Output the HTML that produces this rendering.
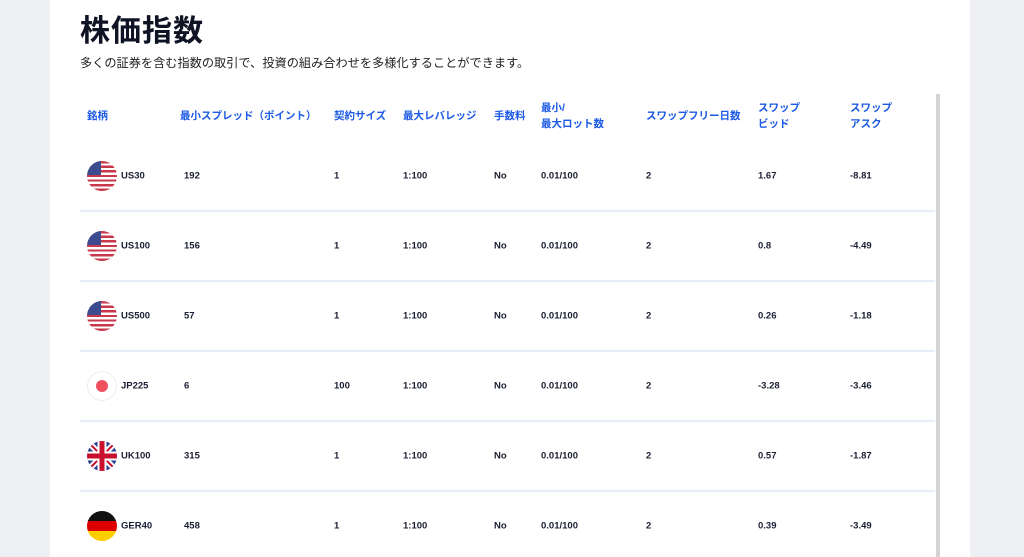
<!DOCTYPE html>
<html><head><meta charset="utf-8"><style>
body{margin:0;width:1024px;height:557px;background:#eef0f4;overflow:hidden;font-family:"Liberation Sans","Noto Sans CJK JP",sans-serif;position:relative}
.panel{position:absolute;left:50px;top:0;width:920px;height:557px;background:#fff}
h1{position:absolute;left:80px;top:6px;margin:0;font-size:30px;font-weight:700;color:#0f1425;letter-spacing:1px}
.sub{position:absolute;left:80px;top:53px;font-size:12.2px;color:#222}
.h{position:absolute;font-size:10.5px;font-weight:700;color:#1d5ae6;line-height:16px}
.c{position:absolute;font-size:9.5px;font-weight:700;color:#1b1f33;transform:translateY(-50%)}
.sep{position:absolute;left:80px;width:855px;height:2px;background:#e8eef9}
.scroll{position:absolute;left:936px;top:94px;width:4px;height:463px;background:#d4d4d4}
.flag{position:absolute;left:87px;width:30px;height:30px;border-radius:50%;overflow:hidden;transform:translateY(-50%)}
.us{background:repeating-linear-gradient(#c8384a 0 2.3px,#fff 2.3px 4.6px)}
.us:before{content:"";position:absolute;left:0;top:0;width:14px;height:14px;background:#3d4b8f}
.jp{background:#fff;box-shadow:inset 0 0 0 1px #eee}
.jp:after{content:"";position:absolute;left:9px;top:9px;width:12px;height:12px;border-radius:50%;background:#f0505e}
.de{background:linear-gradient(#111 0 33%,#dd0000 33% 66%,#ffce00 66%)}
</style></head><body>
<div class="panel"></div>
<h1>株価指数</h1>
<div class="sub">多くの証券を含む指数の取引で、投資の組み合わせを多様化することができます。</div>
<div class="h" style="left:87px;top:108px">銘柄</div>
<div class="h" style="left:180px;top:108px">最小スプレッド（ポイント）</div>
<div class="h" style="left:334px;top:108px">契約サイズ</div>
<div class="h" style="left:403px;top:108px">最大レバレッジ</div>
<div class="h" style="left:494px;top:108px">手数料</div>
<div class="h" style="left:541px;top:100px">最小/<br>最大ロット数</div>
<div class="h" style="left:646px;top:108px">スワップフリー日数</div>
<div class="h" style="left:758px;top:100px">スワップ<br>ビッド</div>
<div class="h" style="left:850px;top:100px">スワップ<br>アスク</div>
<div class="scroll"></div>
<div class="sep" style="top:210px"></div><div class="sep" style="top:280px"></div><div class="sep" style="top:350px"></div><div class="sep" style="top:420px"></div><div class="sep" style="top:490px"></div>

<div class="flag us" style="top:176px"></div>
<div class="flag us" style="top:246px"></div>
<div class="flag us" style="top:316px"></div>
<div class="flag jp" style="top:386px"></div>
<div class="flag" style="top:456px"><svg width="30" height="30" viewBox="0 0 30 30"><rect width="30" height="30" fill="#2b3d8c"/><path d="M0 0L30 30M30 0L0 30" stroke="#fff" stroke-width="6"/><path d="M0 0L30 30M30 0L0 30" stroke="#c8102e" stroke-width="2"/><path d="M15 0V30M0 15H30" stroke="#fff" stroke-width="9"/><path d="M15 0V30M0 15H30" stroke="#c8102e" stroke-width="5"/></svg></div>
<div class="flag de" style="top:526px"></div>

<div class="c" style="left:121px;top:176px">US30</div><div class="c" style="left:184px;top:176px">192</div><div class="c" style="left:334px;top:176px">1</div><div class="c" style="left:403px;top:176px">1:100</div><div class="c" style="left:494px;top:176px">No</div><div class="c" style="left:541px;top:176px">0.01/100</div><div class="c" style="left:646px;top:176px">2</div><div class="c" style="left:758px;top:176px">1.67</div><div class="c" style="left:850px;top:176px">-8.81</div>
<div class="c" style="left:121px;top:246px">US100</div><div class="c" style="left:184px;top:246px">156</div><div class="c" style="left:334px;top:246px">1</div><div class="c" style="left:403px;top:246px">1:100</div><div class="c" style="left:494px;top:246px">No</div><div class="c" style="left:541px;top:246px">0.01/100</div><div class="c" style="left:646px;top:246px">2</div><div class="c" style="left:758px;top:246px">0.8</div><div class="c" style="left:850px;top:246px">-4.49</div>
<div class="c" style="left:121px;top:316px">US500</div><div class="c" style="left:184px;top:316px">57</div><div class="c" style="left:334px;top:316px">1</div><div class="c" style="left:403px;top:316px">1:100</div><div class="c" style="left:494px;top:316px">No</div><div class="c" style="left:541px;top:316px">0.01/100</div><div class="c" style="left:646px;top:316px">2</div><div class="c" style="left:758px;top:316px">0.26</div><div class="c" style="left:850px;top:316px">-1.18</div>
<div class="c" style="left:121px;top:386px">JP225</div><div class="c" style="left:184px;top:386px">6</div><div class="c" style="left:334px;top:386px">100</div><div class="c" style="left:403px;top:386px">1:100</div><div class="c" style="left:494px;top:386px">No</div><div class="c" style="left:541px;top:386px">0.01/100</div><div class="c" style="left:646px;top:386px">2</div><div class="c" style="left:758px;top:386px">-3.28</div><div class="c" style="left:850px;top:386px">-3.46</div>
<div class="c" style="left:121px;top:456px">UK100</div><div class="c" style="left:184px;top:456px">315</div><div class="c" style="left:334px;top:456px">1</div><div class="c" style="left:403px;top:456px">1:100</div><div class="c" style="left:494px;top:456px">No</div><div class="c" style="left:541px;top:456px">0.01/100</div><div class="c" style="left:646px;top:456px">2</div><div class="c" style="left:758px;top:456px">0.57</div><div class="c" style="left:850px;top:456px">-1.87</div>
<div class="c" style="left:121px;top:526px">GER40</div><div class="c" style="left:184px;top:526px">458</div><div class="c" style="left:334px;top:526px">1</div><div class="c" style="left:403px;top:526px">1:100</div><div class="c" style="left:494px;top:526px">No</div><div class="c" style="left:541px;top:526px">0.01/100</div><div class="c" style="left:646px;top:526px">2</div><div class="c" style="left:758px;top:526px">0.39</div><div class="c" style="left:850px;top:526px">-3.49</div>
</body></html>
